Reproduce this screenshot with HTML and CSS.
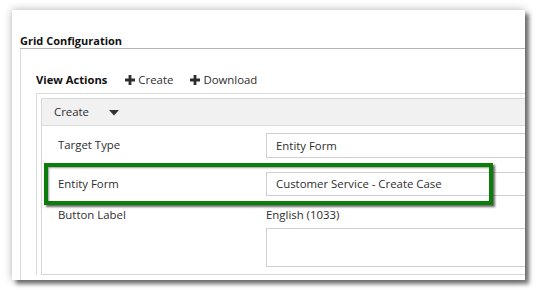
FILE: index.html
```html
<!DOCTYPE html>
<html>
<head>
<meta charset="utf-8">
<link rel="stylesheet" href="styles.css">
</head>
<body>
<div class="stage">
  <div class="panel">
    <div class="grid-title">Grid Configuration</div>
    <div class="grid-section">
      <div class="view-actions">
        <span class="va-title">View Actions</span>
        <span class="va-btn"><svg class="plus" viewBox="0 0 10 10" width="10" height="10"><path d="M3.6 0h2.8v3.6H10v2.8H6.4V10H3.6V6.4H0V3.6h3.6z"/></svg>Create</span>
        <span class="va-btn"><svg class="plus" viewBox="0 0 10 10" width="10" height="10"><path d="M3.6 0h2.8v3.6H10v2.8H6.4V10H3.6V6.4H0V3.6h3.6z"/></svg>Download</span>
      </div>
      <div class="actions-outer">
        <div class="actions-box">
          <div class="action-head"><span>Create</span><svg class="tri" viewBox="0 0 10 6" width="10" height="6"><path d="M0 0h10L5 5.5z"/></svg></div>
          <div class="action-form">
            <div class="row row-target">
              <div class="label">Target Type</div>
              <div class="field"><div class="input input-tall">Entity Form</div></div>
            </div>
            <div class="row row-entity">
              <div class="label">Entity Form</div>
              <div class="field"><div class="input">Customer Service - Create Case</div></div>
            </div>
            <div class="row row-button">
              <div class="label">Button Label</div>
              <div class="field">
                <div class="lang">English (1033)</div>
                <div class="textarea"></div>
              </div>
            </div>
          </div>
        </div>
      </div>
    </div>
  </div>
  <div class="highlight"></div>
</div>
</body>
</html>
```

FILE: styles.css
```css
html, body {
  margin: 0;
  padding: 0;
  background: #ffffff;
}
body {
  font-family: "Open Sans", "Noto Sans", sans-serif;
  font-size: 11.4px;
  color: #2e2e2e;
}
.stage {
  position: relative;
  width: 536px;
  height: 290px;
  padding: 10px 0 0 12px;
  box-sizing: border-box;
}
.panel {
  width: 513px;
  height: 270px;
  background: #fff;
  overflow: hidden;
  box-shadow: 4px 4px 4px rgba(0,0,0,0.5), 0 0 8px rgba(0,0,0,0.3);
  padding-left: 8px;
  box-sizing: border-box;
}
.grid-title {
  height: 39px;
  padding-top: 23px;
  box-sizing: border-box;
  line-height: 15px;
  font-weight: 700;
  font-size: 11px;
  color: #111;
  border-bottom: 1px solid #b4b4b4;
  width: 560px;
}
.grid-section {
  border-left: 1px solid #dcdcdc;
  padding-left: 15px;
  width: 560px;
  height: 240px;
}
.view-actions {
  display: flex;
  align-items: center;
  height: 16px;
  padding-top: 23px;
  margin-bottom: 5px;
  line-height: 16px;
}
.va-title {
  font-weight: 700;
  font-size: 11.2px;
  color: #111;
  margin-right: 18px;
}
.va-btn {
  display: inline-flex;
  align-items: center;
  gap: 3px;
  margin-right: 17px;
}
.plus { fill: #2e2e2e; }
.actions-outer {
  border-top: 1px solid #dcdcdc;
  border-left: 1px solid #dcdcdc;
  padding: 4px 0 0 4px;
}
.actions-box {
  border: 1px solid #d8d8d8;
  border-right: none;
  height: 175px;
}
.action-head {
  height: 26px;
  background: #f2f1f1;
  border-bottom: 1px solid #dcdcdc;
  display: flex;
  align-items: center;
  padding-left: 12px;
  gap: 20px;
  line-height: 16px;
}
.tri { fill: #333; margin-top: 1px; }
.action-form {
  padding: 7px 0 0 16px;
}
.row {
  display: flex;
}
.row-target { margin-bottom: 14px; }
.row-entity { margin-bottom: 11px; }
.label {
  width: 208px;
  flex: none;
  line-height: 24px;
}
.field { flex: 1; }
.input {
  height: 24px;
  box-sizing: border-box;
  border: 1px solid #cfcfcf;
  border-right: none;
  padding-left: 9px;
  line-height: 22px;
}
.input-tall { height: 25px; line-height: 23px; }
.row-button .label { line-height: 16px; }
.lang {
  line-height: 16px;
  height: 21px;
}
.textarea {
  height: 39px;
  box-sizing: border-box;
  border: 1px solid #cfcfcf;
  border-right: none;
}
.highlight {
  position: absolute;
  left: 44px;
  top: 163px;
  width: 449px;
  height: 42px;
  box-sizing: border-box;
  border: 4px solid #0a7d0a;
  box-shadow: 2px 2px 2px rgba(0,0,0,0.6), inset 1px 1px 2px rgba(0,0,0,0.4);
}
```
